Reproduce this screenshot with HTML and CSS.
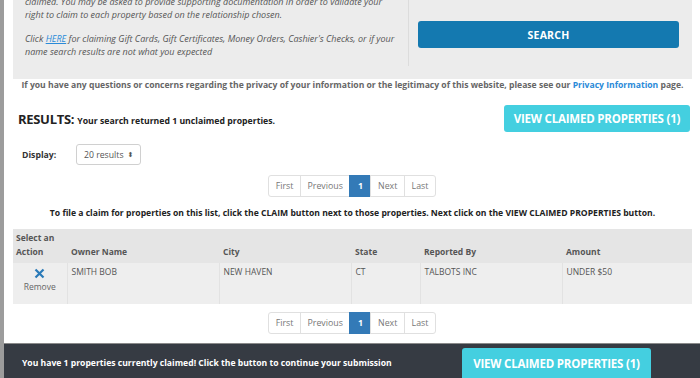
FILE: index.html
```html
<!DOCTYPE html>
<html lang="en">
<head>
<meta charset="utf-8">
<link rel="stylesheet" href="styles.css">
</head>
<body>
<div class="page">
  <section class="panel">
    <div class="panel-left">
      <p>claimed. You may be asked to provide supporting documentation in order to validate your<br>right to claim to each property based on the relationship chosen.</p>
      <p>Click <a href="#" class="link-here">HERE</a> for claiming Gift Cards, Gift Certificates, Money Orders, Cashier's Checks, or if your name search results are not what you expected</p>
    </div>
    <div class="panel-right">
      <button class="btn-search">SEARCH</button>
    </div>
  </section>

  <p class="privacy">If you have any questions or concerns regarding the privacy of your information or the legitimacy of this website, please see our <a href="#">Privacy Information</a> page.</p>

  <div class="results-row">
    <h2 class="results-title">RESULTS: <span>Your search returned 1 unclaimed properties.</span></h2>
    <button class="btn-claimed">VIEW CLAIMED PROPERTIES (1)</button>
  </div>

  <div class="display-row">
    <label class="display-label">Display:</label>
    <div class="select">20 results <span class="caret">&#x2B0D;</span></div>
  </div>

  <nav class="pager">
    <span class="pg">First</span><span class="pg">Previous</span><span class="pg active">1</span><span class="pg">Next</span><span class="pg">Last</span>
  </nav>

  <p class="instructions">To file a claim for properties on this list, click the CLAIM button next to those properties. Next click on the VIEW CLAIMED PROPERTIES button.</p>

  <table class="results">
    <thead>
      <tr>
        <th class="c-action">Select an Action</th>
        <th class="c-owner">Owner Name</th>
        <th class="c-city">City</th>
        <th class="c-state">State</th>
        <th class="c-rep">Reported By</th>
        <th class="c-amt">Amount</th>
      </tr>
    </thead>
    <tbody>
      <tr>
        <td class="c-action">
          <svg class="x-icon" width="11" height="11" viewBox="0 0 11 11"><path d="M1.5 1.5L9.5 9.5M9.5 1.5L1.5 9.5" stroke="#2a7ab8" stroke-width="2.2" stroke-linecap="butt"/></svg>
          <div class="remove">Remove</div>
        </td>
        <td>SMITH BOB</td>
        <td>NEW HAVEN</td>
        <td>CT</td>
        <td>TALBOTS INC</td>
        <td>UNDER $50</td>
      </tr>
    </tbody>
  </table>

  <nav class="pager pager-bottom">
    <span class="pg">First</span><span class="pg">Previous</span><span class="pg active">1</span><span class="pg">Next</span><span class="pg">Last</span>
  </nav>
</div>

<footer class="footer">
  <p class="footer-text">You have 1 properties currently claimed! Click the button to continue your submission</p>
  <button class="btn-claimed btn-footer">VIEW CLAIMED PROPERTIES (1)</button>
</footer>
</body>
</html>
```

FILE: styles.css
```css
html, body {
  margin: 0;
  padding: 0;
  height: 100%;
  overflow: hidden;
  background: #fff;
  font-family: "Open Sans", "DejaVu Sans", sans-serif;
  color: #333;
}
body {
  border-left: 4px solid #9c9c9c;
  box-sizing: border-box;
  display: flex;
  flex-direction: column;
}
.page {
  flex: 1;
  padding: 0 8px 0 9px;
}
.panel {
  display: flex;
  background: #ececec;
  margin-top: -5px;
  height: 84px;
}
.panel-left {
  width: 383px;
  padding: 0 0 0 12px;
  font-style: italic;
  font-size: 9px;
  line-height: 13px;
  color: #555;
}
.panel-left p {
  margin: 0 0 11px 0;
}
.link-here {
  color: #2a8ad8;
}
.panel-right {
  flex: 1;
  border-left: 1px solid #dcdcdc;
  border-top: 1px solid #cfcfcf;
  height: 71px;
  padding: 25px 13px 0 9px;
  box-sizing: border-box;
}
.btn-search {
  display: block;
  width: 100%;
  height: 27px;
  border: 0;
  border-radius: 3px;
  background: #1479b0;
  color: #fff;
  font-family: inherit;
  font-weight: 700;
  font-size: 10.5px;
  letter-spacing: 0.2px;
}
.privacy {
  margin: 0;
  text-align: center;
  font-size: 8.6px;
  line-height: 12px;
  font-weight: 700;
  color: #666;
  padding-top: 0;
}
.privacy a {
  color: #2a8ad8;
  text-decoration: none;
}
.results-row {
  display: flex;
  align-items: center;
  justify-content: space-between;
  margin-top: 14px;
  padding-left: 5px;
  padding-right: 2px;
}
.results-title {
  margin: 0;
  font-size: 13px;
  font-weight: 700;
  color: #222;
  letter-spacing: -0.3px;
}
.results-title span {
  font-size: 8.7px;
  letter-spacing: 0;
}
.btn-claimed {
  width: 186px;
  height: 27px;
  border: 0;
  border-radius: 3px;
  background: #44cfe0;
  color: #fff;
  font-family: inherit;
  font-weight: 700;
  font-size: 11.5px;
  letter-spacing: -0.2px;
  padding: 0;
}
.display-row {
  display: flex;
  align-items: center;
  margin-top: 12px;
  padding-left: 9px;
}
.display-label {
  font-size: 8.7px;
  font-weight: 700;
  color: #333;
  width: 54px;
}
.select {
  width: 65px;
  height: 21px;
  box-sizing: border-box;
  border: 1px solid #d0d0d0;
  border-radius: 3px;
  font-size: 8.7px;
  color: #555;
  display: flex;
  align-items: center;
  padding-left: 7px;
  gap: 4px;
}
.caret {
  font-size: 7px;
}
.pager {
  display: flex;
  justify-content: center;
  margin-top: 10px;
}
.pg {
  height: 22px;
  box-sizing: border-box;
  border: 1px solid #e0e0e0;
  margin-left: -1px;
  font-size: 8.8px;
  color: #777;
  display: flex;
  align-items: center;
  padding: 0 6.6px;
}
.pg:first-child {
  border-radius: 3px 0 0 3px;
}
.pg:last-child {
  border-radius: 0 3px 3px 0;
}
.pg.active {
  background: #337ab7;
  border-color: #337ab7;
  color: #fff;
  font-weight: 700;
  padding: 0 7.5px;
}
.instructions {
  margin: 10px 0 0 0;
  text-align: center;
  font-size: 8.6px;
  font-weight: 700;
  line-height: 12px;
  color: #222;
}
.results {
  width: 100%;
  margin-top: 10px;
  border-collapse: collapse;
  font-size: 8.5px;
  color: #555;
}
.results th {
  background: #e5e5e5;
  text-align: left;
  font-weight: 700;
  vertical-align: bottom;
  padding: 2px 4px 4px 4px;
  line-height: 14px;
  color: #555;
}
.results th.c-action {
  width: 47px;
  padding-left: 3px;
}
.results td {
  background: #eeeeee;
  border-left: 1px solid #e2e2e2;
  vertical-align: top;
  padding: 3px 4px 0 4px;
  height: 38px;
  line-height: 12px;
}
.results td:first-child {
  border-left: 0;
  text-align: center;
}
.c-owner { width: 144px; }
.c-city { width: 124px; }
.c-state { width: 61px; }
.c-rep { width: 134px; }
.x-icon {
  display: block;
  margin: 2px auto 0;
}
.remove {
  margin-top: 2px;
  color: #666;
}
.pager-bottom {
  margin-top: 8px;
}
.footer {
  flex: 0 0 32px;
  background: #363b43;
  border-top: 1px solid #8a8a8a;
  display: flex;
  align-items: flex-start;
  margin-left: -4px;
  padding-left: 22px;
}
.footer-text {
  margin: 13px 0 0 0;
  width: 440px;
  font-size: 8.6px;
  font-weight: 700;
  color: #fff;
}
.btn-footer {
  margin-top: 4px;
  width: 189px;
  height: 30px;
  border-radius: 3px 3px 0 0;
}
```
